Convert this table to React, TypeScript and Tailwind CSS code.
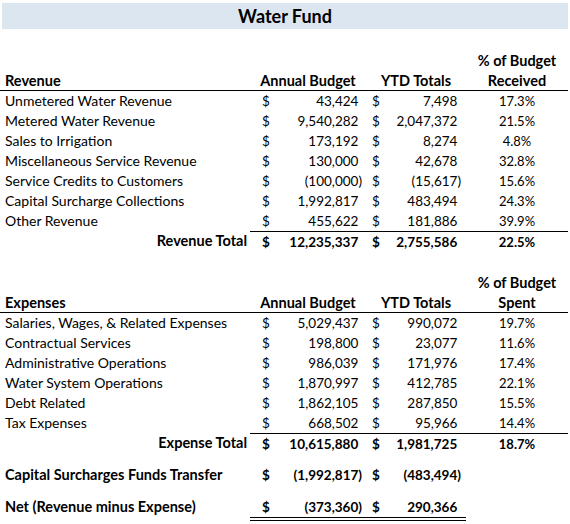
const revenue = [
  ['Unmetered Water Revenue', '43,424', '7,498', '17.3%'],
  ['Metered Water Revenue', '9,540,282', '2,047,372', '21.5%'],
  ['Sales to Irrigation', '173,192', '8,274', '4.8%'],
  ['Miscellaneous Service Revenue', '130,000', '42,678', '32.8%'],
  ['Service Credits to Customers', '(100,000)', '(15,617)', '15.6%'],
  ['Capital Surcharge Collections', '1,992,817', '483,494', '24.3%'],
  ['Other Revenue', '455,622', '181,886', '39.9%'],
];

const expenses = [
  ['Salaries, Wages, & Related Expenses', '5,029,437', '990,072', '19.7%'],
  ['Contractual Services', '198,800', '23,077', '11.6%'],
  ['Administrative Operations', '986,039', '171,976', '17.4%'],
  ['Water System Operations', '1,870,997', '412,785', '22.1%'],
  ['Debt Related', '1,862,105', '287,850', '15.5%'],
  ['Tax Expenses', '668,502', '95,966', '14.4%'],
];

const grid = 'grid grid-cols-[250px_116px_100px_102px]';

const Amount = ({ value }: { value: string }) => (
  <span>
    {value}
    {!value.endsWith(')') && <span className="invisible">)</span>}
  </span>
);

// $ sign on the left of the cell, figure on the right (accounting format)
const MoneyCells = ({ budget, ytd }: { budget: string; ytd: string }) => (
  <>
    <div className="flex justify-between pl-[12px] pr-[4px]">
      <span>$</span>
      <Amount value={budget} />
    </div>
    <div className="flex justify-between pl-[6px] pr-[5px]">
      <span>$</span>
      <Amount value={ytd} />
    </div>
  </>
);

const Header = ({ title, pct }: { title: string; pct: string }) => (
  <div className={`${grid} text-[14.5px] font-bold`}>
    <div className="col-span-3 h-[20px]" />
    <div className="h-[20px] text-center leading-[20px]">% of Budget</div>
    <div className={`${grid} col-span-4 h-[20px] items-center border-b border-black leading-[19px]`}>
      <div className="pl-[5px]">{title}</div>
      <div className="text-center">Annual Budget</div>
      <div className="text-center">YTD Totals</div>
      <div className="text-center">{pct}</div>
    </div>
  </div>
);

const Section = ({
  title,
  pct,
  rows,
  total,
}: {
  title: string;
  pct: string;
  rows: string[][];
  total: string[];
}) => (
  <div>
    <Header title={title} pct={pct} />
    {rows.map((r) => (
      <div key={r[0]} className={`${grid} h-[20px] items-center leading-[20px]`}>
        <div className="pl-[5px]">{r[0]}</div>
        <div className="col-span-2 grid grid-cols-[116px_100px] text-[13.5px]">
          <MoneyCells budget={r[1]} ytd={r[2]} />
        </div>
        <div className="text-center text-[13px]">{r[3]}</div>
      </div>
    ))}
    <div className={`${grid} h-[20px] items-center font-bold leading-[20px]`}>
      <div className="pr-[3px] text-right text-[14.5px]">{total[0]}</div>
      <div className="col-span-3 grid h-[20px] grid-cols-[116px_100px_102px] items-center border-t border-black text-[13.5px]">
        <MoneyCells budget={total[1]} ytd={total[2]} />
        <div className="text-center text-[13px]">{total[3]}</div>
      </div>
    </div>
  </div>
);

export default function App() {
  return (
    <div className="h-[524px] w-[570px] bg-white pt-[3px] font-['Lato',sans-serif] text-[14px] text-black">
      <div className="mx-[2px] flex h-[26px] items-center justify-center bg-[#dce6f1] text-[18px] font-bold">
        Water Fund
      </div>
      <div className="h-[22px]" />
      <Section
        title="Revenue"
        pct="Received"
        rows={revenue}
        total={['Revenue Total', '12,235,337', '2,755,586', '22.5%']}
      />
      <div className="h-[22px]" />
      <Section
        title="Expenses"
        pct="Spent"
        rows={expenses}
        total={['Expense Total', '10,615,880', '1,981,725', '18.7%']}
      />
      <div className="h-[12px]" />
      <div className={`${grid} h-[20px] items-center font-bold leading-[20px]`}>
        <div className="pl-[5px] text-[14.5px]">Capital Surcharges Funds Transfer</div>
        <div className="col-span-2 grid grid-cols-[116px_100px] text-[13.5px]">
          <MoneyCells budget="(1,992,817)" ytd="(483,494)" />
        </div>
      </div>
      <div className="h-[12px]" />
      <div className={`${grid} items-start font-bold`}>
        <div className="h-[20px] pl-[5px] text-[14.5px] leading-[20px]">Net (Revenue minus Expense)</div>
        <div className="col-span-2 grid h-[24px] grid-cols-[116px_100px] border-b-[4px] border-double border-black text-[13.5px] leading-[20px]">
          <MoneyCells budget="(373,360)" ytd="290,366" />
        </div>
      </div>
    </div>
  );
}
